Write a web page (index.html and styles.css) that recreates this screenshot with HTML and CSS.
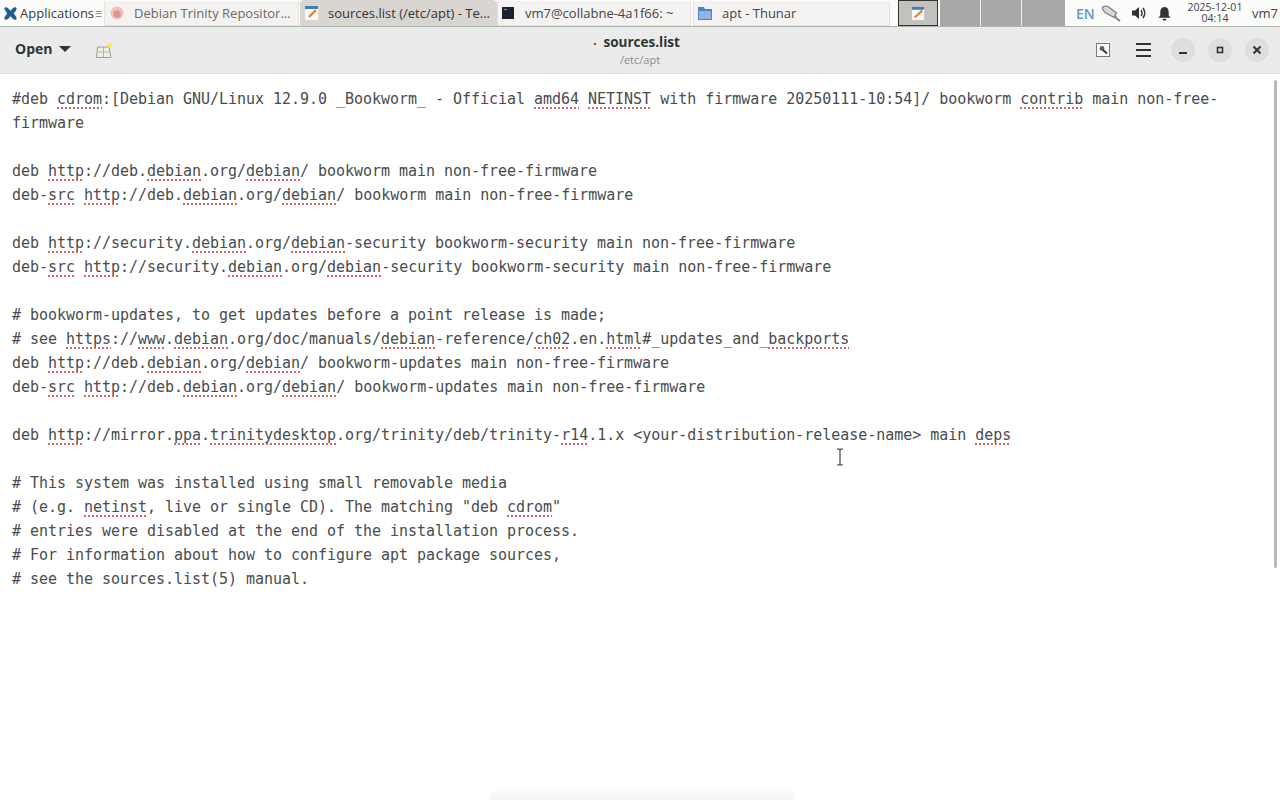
FILE: index.html
```html
<!DOCTYPE html>
<html lang="en">
<head>
<meta charset="utf-8">
<title>sources.list</title>
<link rel="stylesheet" href="styles.css">
</head>
<body>
<div class="panel">
  <div class="apps">
    <svg class="xfce" viewBox="0 0 16 16"><path d="M2 1.5 C4 0.5 6 2.5 8 5 C10 2.5 12 0.5 14 1.5 C15.5 3.5 13 6 11.5 8 C13 10 15.5 12.5 14 14.5 C12 15.5 10 13.5 8 11 C6 13.5 4 15.5 2 14.5 C0.5 12.5 3 10 4.5 8 C3 6 0.5 3.5 2 1.5 Z" fill="#1b5f8f"/><path d="M1 3 L4 6" stroke="#6db5e0" stroke-width="1"/></svg>
    <span>Applications</span><span class="sep">☰</span>
  </div>
  <div class="task first">
    <svg class="ticon" viewBox="0 0 16 16"><circle cx="8" cy="8" r="6.5" fill="#f0c2bd"/><circle cx="8" cy="9" r="3.8" fill="#dd9793"/></svg>
    <span class="tlabel">Debian Trinity Repositor...</span>
  </div>
  <div class="task second">
    <svg class="ticon" viewBox="0 0 16 16"><rect x="1" y="2" width="13" height="13" fill="#fafafa"/><rect x="1" y="1" width="13" height="3" fill="#3d7cc0"/><path d="M5 12 L12 5" stroke="#e0813a" stroke-width="2.4"/></svg>
    <span class="tlabel">sources.list (/etc/apt) - Te...</span>
  </div>
  <div class="task third">
    <svg class="ticon" viewBox="0 0 16 16"><rect x="1" y="2" width="12" height="12" fill="#1c2130"/><rect x="3" y="4" width="3" height="1" fill="#8a93a8"/></svg>
    <span class="tlabel">vm7@collabne-4a1f66: ~</span>
  </div>
  <div class="task fourth">
    <svg class="ticon" viewBox="0 0 16 16"><path d="M1 2 H7 L8 4 H15 V15 H1 Z" fill="#4f84c4"/><rect x="2" y="6" width="12" height="8" fill="#8db4e2"/></svg>
    <span class="tlabel">apt - Thunar</span>
  </div>
  <div class="pager">
    <div class="ws current"><svg class="wsicon" viewBox="0 0 16 16"><rect x="1" y="2" width="13" height="13" fill="#fafafa"/><rect x="1" y="1" width="13" height="3" fill="#3d7cc0"/><path d="M4 12 L12 5" stroke="#e0813a" stroke-width="2.4"/></svg></div>
    <div class="ws"></div><div class="ws"></div><div class="ws"></div>
  </div>
  <div class="tray">
    <span class="lang">EN</span>
    <svg class="net" viewBox="0 0 20 18"><path d="M1.5 5 Q1 2.5 4 2 L7 2.5 L15.5 9 L13 13.5 L4 8.5 Z" fill="#d8dbdd" stroke="#777b7e" stroke-width="1.2"/><path d="M13.5 10.5 L16 12.5 L15 15 L12.5 13" fill="#8a8e91"/><path d="M15 14 L19 17" stroke="#777b7e" stroke-width="1.6"/></svg>
    <svg class="vol" viewBox="0 0 16 16"><path d="M1 5.5 H4 L8 2 V14 L4 10.5 H1 Z" fill="#2e3436"/><path d="M10 5 Q12 8 10 11 M12 3 Q15.5 8 12 13" fill="none" stroke="#2e3436" stroke-width="1.4"/></svg>
    <svg class="bell" viewBox="0 0 16 16"><path d="M8 1 C11.5 1 12.5 4 12.5 7 V10 L14.5 12.5 H1.5 L3.5 10 V7 C3.5 4 4.5 1 8 1 Z" fill="#2e3436"/><rect x="6" y="13.5" width="4" height="2" rx="1" fill="#2e3436"/></svg>
    <div class="clock"><div>2025-12-01</div><div>04:14</div></div>
    <span class="user">vm7</span>
  </div>
</div>
<header class="headerbar">
  <div class="hleft">
    <div class="open"><span>Open</span><span class="caret"></span></div>
    <svg class="newdoc" viewBox="0 0 18 18"><path d="M2.5 5 H14 L16 15.5 H1.5 Z" fill="#efeee6" stroke="#9c9c94"/><path d="M8.5 5 V15 M2 10 H15" stroke="#b5b5ac"/><circle cx="14.5" cy="3.5" r="2.4" fill="#f4ea4c"/></svg>
  </div>
  <div class="title">
    <div class="tname"><span class="dot">•</span>sources.list</div>
    <div class="tpath">/etc/apt</div>
  </div>
  <div class="hright">
    <svg class="tool" viewBox="0 0 14 14"><rect x="0.5" y="0.5" width="13" height="13" fill="#fbfbfb" stroke="#77797a"/><circle cx="6" cy="5.5" r="2.4" fill="#5c6062"/><path d="M7 7 L11 10.5" stroke="#33373a" stroke-width="2"/></svg>
    <div class="burger"><i></i><i></i><i></i></div>
    <div class="wbtn"><svg viewBox="0 0 10 10"><rect x="1" y="7" width="8" height="2" fill="#2e3436"/></svg></div>
    <div class="wbtn"><svg viewBox="0 0 10 10"><rect x="2.5" y="2.5" width="5" height="5" fill="none" stroke="#2e3436" stroke-width="1.6"/></svg></div>
    <div class="wbtn"><svg viewBox="0 0 10 10"><path d="M1.5 1.5 L8.5 8.5 M8.5 1.5 L1.5 8.5" stroke="#2e3436" stroke-width="2"/></svg></div>
  </div>
</header>
<main class="editor">
<div class="text">
<div class="line">#deb <u>cdrom</u>:[Debian GNU/Linux 12.9.0 _Bookworm_ - Official <u>amd64</u> <u>NETINST</u> with firmware 20250111-10:54]/ bookworm <u>contrib</u> main <span>non-free-</span><span>firmware</span></div>
<div class="line blank"></div>
<div class="line">deb <u>http</u>://deb.<u>debian</u>.org/<u>debian</u>/ bookworm main non-free-firmware</div>
<div class="line">deb-<u>src</u> <u>http</u>://deb.<u>debian</u>.org/<u>debian</u>/ bookworm main non-free-firmware</div>
<div class="line blank"></div>
<div class="line">deb <u>http</u>://security.<u>debian</u>.org/<u>debian</u>-security bookworm-security main non-free-firmware</div>
<div class="line">deb-<u>src</u> <u>http</u>://security.<u>debian</u>.org/<u>debian</u>-security bookworm-security main non-free-firmware</div>
<div class="line blank"></div>
<div class="line"># bookworm-updates, to get updates before a point release is made;</div>
<div class="line"># see <u>https</u>://<u>www</u>.<u>debian</u>.org/doc/manuals/<u>debian</u>-reference/<u>ch02</u>.en.<u>html</u>#_updates_and_<u>backports</u></div>
<div class="line">deb <u>http</u>://deb.<u>debian</u>.org/<u>debian</u>/ bookworm-updates main non-free-firmware</div>
<div class="line">deb-<u>src</u> <u>http</u>://deb.<u>debian</u>.org/<u>debian</u>/ bookworm-updates main non-free-firmware</div>
<div class="line blank"></div>
<div class="line">deb <u>http</u>://mirror.<u>ppa</u>.<u>trinitydesktop</u>.org/trinity/deb/trinity-<u>r14</u>.1.x &lt;your-distribution-release-name&gt; main <u>deps</u></div>
<div class="line blank"></div>
<div class="line"># This system was installed using small removable media</div>
<div class="line"># (e.g. <u>netinst</u>, live or single CD). The matching "deb <u>cdrom</u>"</div>
<div class="line"># entries were disabled at the end of the installation process.</div>
<div class="line"># For information about how to configure apt package sources,</div>
<div class="line"># see the sources.list(5) manual.</div>
</div>
<div class="scrollbar"></div>
<svg class="ibeam" viewBox="0 0 8 18"><path d="M1 1 H3 Q4 1 4 2.5 V15.5 Q4 17 3 17 H1 M7 1 H5 Q4 1 4 2.5 M4 15.5 Q4 17 5 17 H7" fill="none" stroke="#333" stroke-width="1.1"/></svg>
<div class="sheen"></div>
</main>
</body>
</html>
```
FILE: styles.css
```css
* { box-sizing: border-box; }
html, body { margin: 0; height: 100%; overflow: hidden; background: #fff; }
body { font-family: "Open Sans", "Noto Sans", sans-serif; display: flex; flex-direction: column; width: 1280px; height: 800px; }

.panel { height: 27px; flex: none; display: flex; align-items: stretch; background: #fbfbfa; border-bottom: 1px solid #a9b4ac; font-size: 13px; color: #3a3d3e; }
.apps { width: 104px; flex: none; display: flex; align-items: center; padding-left: 3px; gap: 2px; }
.xfce { width: 15px; height: 15px; flex: none; }
.apps .sep { font-size: 8px; color: #777; margin-left: -1px; }
.task { height: 26px; display: flex; align-items: center; flex: none; background: #f4f3f1; border: 1px solid #e3e2df; border-top-color: #fafafa; border-radius: 4px 4px 0 0; color: #555; }
.task .tlabel { white-space: nowrap; }
.ticon { width: 16px; height: 16px; flex: none; }
.first { width: 195px; margin-right: 1px; padding-left: 4px; gap: 9px; color: #6a6a68; }
.second { width: 197px; padding-left: 3px; gap: 8px; background: #d9d5d0; color: #333; border-color: #d9d5d0; }
.third { width: 194px; margin-right: 2px; padding-left: 3px; gap: 8px; color: #444; }
.fourth { width: 197px; padding-left: 3px; gap: 9px; color: #444; }
.pager { display: flex; margin-left: 8px; height: 26px; flex: none; }
.ws { width: 41px; background: #a8a8a8; border-right: 1px solid #eee; }
.ws:last-child { width: 43px; border-right: 0; }
.ws.current { width: 40px; background: #c3c1bd; border: 1px solid #333; display: flex; align-items: center; justify-content: center; margin-right: 2px; }
.wsicon { width: 15px; height: 15px; }
.tray { flex: 1; display: flex; align-items: center; padding-left: 11px; position: relative; white-space: nowrap; min-width: 0; overflow: hidden; }
.lang { color: #5a9bce; font-size: 14px; font-weight: 600; width: 18px; }
.net { width: 20px; height: 18px; margin-left: 7px; flex: none; }
.vol { width: 16px; height: 16px; margin-left: 10px; flex: none; }
.bell { width: 15px; height: 15px; margin-left: 10px; flex: none; }
.clock { font-size: 10.5px; line-height: 11px; text-align: center; color: #444; margin-left: 15px; width: 56px; flex: none; }
.user { margin-left: 9px; font-size: 13px; color: #444; }

.headerbar { height: 47px; flex: none; display: flex; align-items: center; background: #ebebeb; border-bottom: 1px solid #dcdcdc; position: relative; }
.hleft { display: flex; align-items: center; padding-left: 15px; padding-bottom: 3px; flex: 1; }
.open { display: flex; align-items: center; gap: 7px; font-size: 14px; font-weight: 700; color: #2e3436; }
.caret { width: 0; height: 0; border: 6px solid transparent; border-top: 6px solid #2e3436; border-bottom: 0; }
.newdoc { width: 18px; height: 18px; margin-left: 24px; margin-top: 5px; }
.title { position: absolute; left: 0; right: 0; top: 0; text-align: center; pointer-events: none; }
.tname { font-size: 13.5px; font-weight: 700; color: #2e3436; line-height: 18px; margin-top: 6px; }
.dot { font-weight: 400; font-size: 9px; margin-right: 7px; margin-left: -7px; }
.tpath { font-size: 11px; color: #8a8c8c; line-height: 16px; margin-top: -1px; }
.hright { display: flex; align-items: center; padding-right: 11px; }
.tool { width: 14px; height: 14px; }
.burger { display: flex; flex-direction: column; gap: 4px; margin-left: 26px; width: 15px; }
.burger i { display: block; height: 2px; background: #2e3436; }
.wbtn { width: 24px; height: 24px; border-radius: 50%; background: #dedede; display: flex; align-items: center; justify-content: center; margin-left: 13px; }
.burger + .wbtn { margin-left: 20px; }
.wbtn svg { width: 10px; height: 10px; }

.editor { flex: 1; position: relative; padding: 13px 20px 0 12px; background: #fff; }
.text { font-family: "DejaVu Sans Mono", monospace; font-size: 15px; letter-spacing: -0.03px; line-height: 24px; color: #484c4e; }
.line { white-space: pre-wrap; }
.blank { height: 24px; }
.text u { text-decoration: underline dotted #d8626a 1.5px; text-underline-offset: 3px; }
.scrollbar { position: absolute; right: 3px; top: 6px; width: 3px; height: 488px; background: #b9b9b9; border-radius: 2px; }
.ibeam { position: absolute; left: 836px; top: 374px; width: 8px; height: 18px; }
.sheen { position: absolute; left: 490px; bottom: 0; width: 304px; height: 11px; background: linear-gradient(#fdfdfd, #f5f5f5); border-radius: 6px 6px 0 0; }
```
